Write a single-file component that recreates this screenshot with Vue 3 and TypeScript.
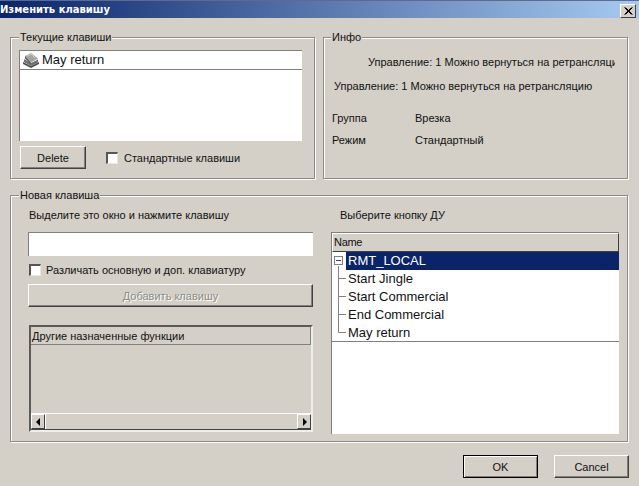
<script setup lang="ts">
const infoRows: { label: string; value: string }[] = [
  { label: 'Группа', value: 'Врезка' },
  { label: 'Режим', value: 'Стандартный' },
]
const remoteKeys: string[] = ['Start Jingle', 'Start Commercial', 'End Commercial', 'May return']
</script>

<template>
  <div class="dialog">
    <header class="titlebar">
      <span class="title">Изменить клавишу</span>
      <button class="close" type="button" aria-label="Закрыть">
        <svg width="9" height="8" viewBox="0 0 9 8"><path d="M0.5 0.5L7.5 7.5M1.5 0.5L8.5 7.5M7.5 0.5L0.5 7.5M8.5 0.5L1.5 7.5" stroke="#000" stroke-width="1" fill="none" /></svg>
      </button>
    </header>

    <div class="top">
      <section class="group current">
        <span class="legend">Текущие клавиши</span>
        <div class="keylist">
          <div class="keyrow">
            <svg class="keyicon" width="18" height="16" viewBox="0 0 18 16">
              <path d="M1 10L9 14L17 10L17 12L9 16L1 12Z" fill="#4c4c4c" />
              <path d="M2 7L9 11L16 7.5L16 10.5L9 14L2 10Z" fill="#6f6f6f" />
              <path d="M3 4L9 1L16 6.5L9 10.5Z" fill="#a3a3a0" />
              <path d="M3 4L9 10.5L9 12L3 6.5Z" fill="#585858" />
              <path d="M5 4L9 2L13 6" stroke="#d0d0cc" fill="none" />
            </svg>
            <span>May return</span>
          </div>
        </div>
        <div class="current-actions">
          <button class="btn delete" type="button">Delete</button>
          <label class="check"><span class="box"></span>Стандартные клавиши</label>
        </div>
      </section>

      <section class="group info">
        <span class="legend">Инфо</span>
        <div class="clipped">Управление: 1 Можно вернуться на ретрансляцию</div>
        <div class="full">Управление: 1 Можно вернуться на ретрансляцию</div>
        <div class="inforows">
          <div v-for="row in infoRows" :key="row.label" class="inforow">
            <span class="infolabel">{{ row.label }}</span>
            <span>{{ row.value }}</span>
          </div>
        </div>
      </section>
    </div>

    <section class="group newkey">
      <span class="legend">Новая клавиша</span>
      <div class="leftcol">
        <div class="caption">Выделите это окно и нажмите клавишу</div>
        <div class="input"></div>
        <label class="check distinguish"><span class="box"></span>Различать основную и доп. клавиатуру</label>
        <button class="btn add" type="button" disabled>Добавить клавишу</button>
        <div class="funcs">
          <div class="funcs-head">Другие назначенные функции</div>
          <div class="funcs-body"></div>
          <div class="hscroll">
            <span class="sbtn"><svg width="5" height="8" viewBox="0 0 5 8"><path d="M4 0V8L0 4Z" fill="#000" /></svg></span>
            <span class="strack"></span>
            <span class="sbtn"><svg width="5" height="8" viewBox="0 0 5 8"><path d="M1 0V8L5 4Z" fill="#000" /></svg></span>
          </div>
        </div>
      </div>
      <div class="rightcol">
        <div class="caption rc">Выберите кнопку ДУ</div>
        <div class="tree">
          <div class="tree-head">Name</div>
          <div class="tree-row">
            <svg class="conn" width="14" height="18" viewBox="0 0 14 18">
              <path d="M6.5 14V18" stroke="#808080" />
              <rect x="2.5" y="4.5" width="8" height="8" fill="#fff" stroke="#808080" />
              <path d="M4 8.5H9" stroke="#404040" />
            </svg>
            <span class="selected">RMT_LOCAL</span>
          </div>
          <div v-for="(key, i) in remoteKeys" :key="key" class="tree-row">
            <svg class="conn" width="14" height="18" viewBox="0 0 14 18">
              <path :d="i === remoteKeys.length - 1 ? 'M6.5 0V8.5H14' : 'M6.5 0V18M6.5 8.5H14'" stroke="#808080" fill="none" />
            </svg>
            <span class="leaf">{{ key }}</span>
          </div>
          <div class="tree-rule"></div>
        </div>
      </div>
    </section>

    <footer class="footer">
      <button class="btn default" type="button">OK</button>
      <button class="btn" type="button">Cancel</button>
    </footer>
  </div>
</template>

<style>
html, body { margin: 0; background: #d4d0c8; }
</style>

<style scoped>
.dialog {
  width: 639px;
  height: 486px;
  background: #d4d0c8;
  display: flex;
  flex-direction: column;
  font: 11px/14px "Liberation Sans", Arial, sans-serif;
  color: #111;
  overflow: hidden;
}
.titlebar {
  height: 18px;
  flex: none;
  box-sizing: border-box;
  display: flex;
  align-items: center;
  justify-content: space-between;
  padding: 0 3px 0 0;
  background: linear-gradient(90deg, #0a246a 0%, #a6caf0 100%);
  border-top: 1px solid #5c6c8e;
}
.title {
  color: #fff;
  font: bold 10px/16px "DejaVu Sans", sans-serif;
}
.close {
  width: 16px;
  height: 14px;
  padding: 0;
  margin-top: 2px;
  display: flex;
  align-items: center;
  justify-content: center;
  background: #d4d0c8;
  border: 1px solid;
  border-color: #fff #404040 #404040 #fff;
}
.top {
  display: flex;
  gap: 8px;
  margin: 19px 0 0 10px;
  height: 142px;
}
.group {
  position: relative;
  box-sizing: border-box;
  border: 1px solid #8d8b86;
  box-shadow: 1px 1px 0 #fff, inset 1px 1px 0 #fff;
}
.legend {
  position: absolute;
  top: -8px;
  left: 8px;
  padding: 0 1px;
  background: #d4d0c8;
}
.info .legend { left: 7px; }
.current, .info { width: 305px; }
.current {
  padding: 12px 0 0 8px;
  display: flex;
  flex-direction: column;
}
.keylist {
  width: 283px;
  height: 91px;
  box-sizing: border-box;
  background: #fff;
  border-top: 1px solid #808080;
  border-left: 1px solid #808080;
}
.keyrow {
  height: 18px;
  display: flex;
  align-items: center;
  gap: 2px;
  padding-left: 2px;
  border-bottom: 1px solid #808080;
  font-size: 13px;
}
.keyicon { flex: none; }
.current-actions {
  display: flex;
  align-items: center;
  margin: 5px 0 0 1px;
}
.btn {
  box-sizing: border-box;
  height: 23px;
  width: 75px;
  padding: 0;
  background: #d4d0c8;
  color: #111;
  font: inherit;
  border: 1px solid;
  border-color: #fff #404040 #404040 #fff;
  box-shadow: inset -1px -1px 0 #808080;
}
.delete { width: 66px; }
.check {
  display: flex;
  align-items: center;
  gap: 5px;
}
.current-actions .check { margin-left: 20px; gap: 6px; }
.box {
  width: 12px;
  height: 12px;
  box-sizing: border-box;
  flex: none;
  background: #fff;
  border-top: 2px solid #555;
  border-left: 2px solid #555;
  border-right: 1px solid #e8e6e0;
  border-bottom: 1px solid #e8e6e0;
}
.info { padding: 17px 0 0 10px; }
.clipped {
  width: 247px;
  margin-left: 34px;
  overflow: hidden;
  white-space: nowrap;
}
.full { margin-top: 10px; white-space: nowrap; }
.inforows {
  margin: 18px 0 0 -2px;
  display: flex;
  flex-direction: column;
  gap: 8px;
}
.inforow { display: flex; }
.infolabel { width: 83px; }
.newkey {
  width: 618px;
  height: 247px;
  margin: 16px 0 0 10px;
  padding: 12px 0 0 17px;
  display: flex;
  gap: 18px;
}
.leftcol { width: 285px; display: flex; flex-direction: column; }
.rightcol { width: 288px; }
.caption { height: 14px; margin-left: 1px; white-space: nowrap; }
.rc { margin-left: 9px; }
.input {
  height: 24px;
  margin-top: 10px;
  box-sizing: border-box;
  background: #fff;
  border-top: 1px solid #808080;
  border-left: 1px solid #808080;
}
.distinguish { margin: 7px 0 0 1px; }
.add {
  width: 285px;
  margin-top: 7px;
  color: #8c8a85;
  text-shadow: 1px 1px 0 #fff;
}
.funcs {
  width: 284px;
  height: 107px;
  margin: 18px 0 0 1px;
  box-sizing: border-box;
  border: 2px solid #5a5a58;
  border-right-color: #efefea;
  border-bottom-color: #efefea;
  display: flex;
  flex-direction: column;
}
.funcs-head {
  height: 18px;
  flex: none;
  box-sizing: border-box;
  padding-left: 1px;
  line-height: 18px;
  border-right: 1px solid #808080;
  border-bottom: 1px solid #808080;
  white-space: nowrap;
}
.funcs-body { flex: 1; }
.hscroll {
  height: 15px;
  flex: none;
  display: flex;
  border-top: 1px solid #fff;
  border-bottom: 1px solid #444;
}
.sbtn {
  width: 14px;
  flex: none;
  box-sizing: border-box;
  display: flex;
  align-items: center;
  justify-content: center;
  border: 1px solid;
  border-color: #fff #404040 #404040 #fff;
}
.strack { flex: 1; border-left: 1px solid #fff; }
.tree {
  margin-top: 10px;
  height: 202px;
  box-sizing: border-box;
  background: #fff;
  border-top: 1px solid #808080;
  border-left: 1px solid #808080;
  overflow: hidden;
}
.tree-head {
  height: 19px;
  box-sizing: border-box;
  padding-left: 1px;
  line-height: 17px;
  letter-spacing: -0.3px;
  background: #d4d0c8;
  border: 1px solid;
  border-color: #fff #404040 #404040 #fff;
}
.tree-row {
  height: 18px;
  display: flex;
  font-size: 13px;
  line-height: 18px;
}
.conn { flex: none; }
.selected {
  flex: 1;
  background: #0a246a;
  color: #fff;
  padding-left: 2px;
}
.leaf { padding-left: 2px; }
.tree-rule { height: 1px; margin-top: -1px; background: #808080; position: relative; }
.footer {
  display: flex;
  justify-content: flex-end;
  gap: 16px;
  margin-top: 13px;
  padding-right: 10px;
}
.default {
  border-color: #000;
  box-shadow: inset 1px 1px 0 #fff, inset -1px -1px 0 #808080;
}
</style>
